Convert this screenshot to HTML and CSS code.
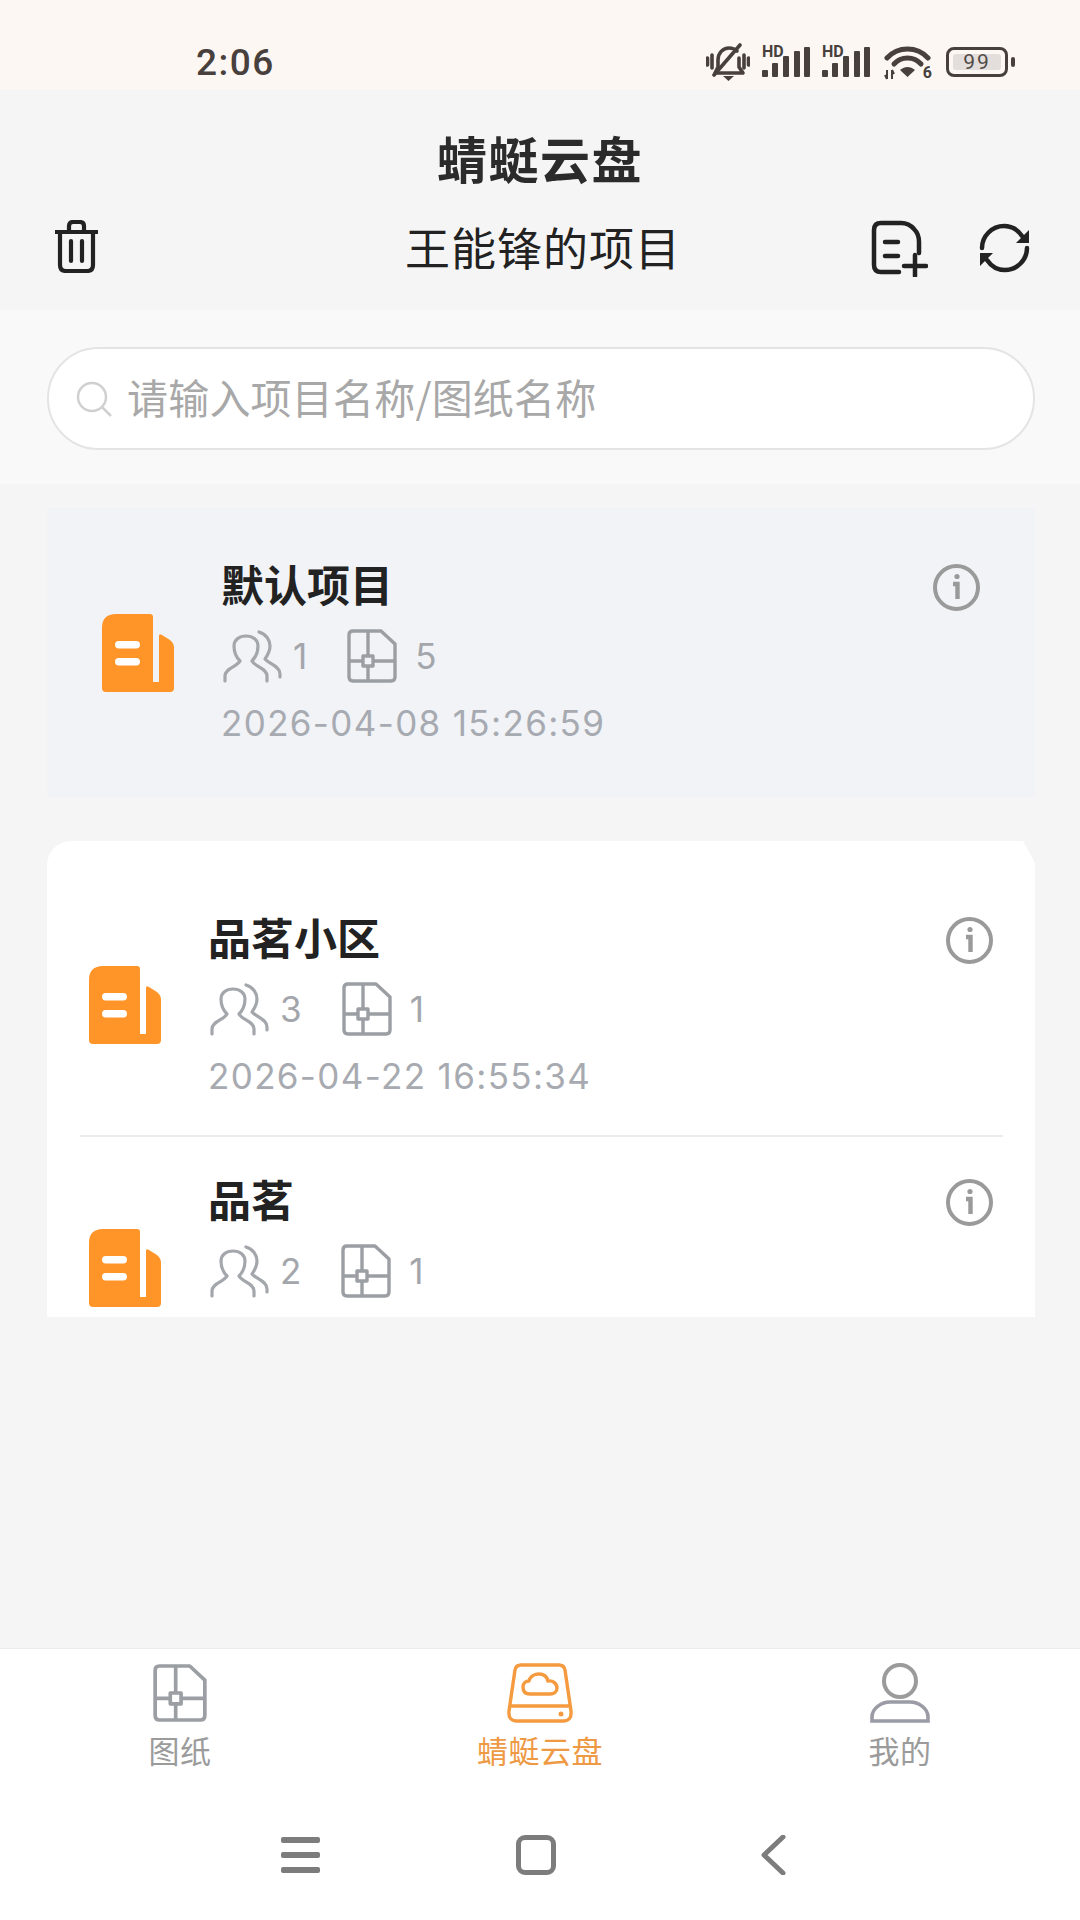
FILE: index.html
```html
<!DOCTYPE html>
<html lang="zh-CN">
<head>
    <meta charset="UTF-8">
    <title>蜻蜓云盘</title>
    <link rel="stylesheet" href="styles.css">
</head>
<body>
    <!-- Shared icons -->
    <svg class="icon-defs" xmlns="http://www.w3.org/2000/svg">
        <symbol id="icon-file" viewBox="0 0 72 78">
            <path fill="#ff9429" d="M14 0H48Q51 0 51 3V68H57V22Q57 19 60 21L68 26Q72 29 72 34V74Q72 78 68 78H4Q0 78 0 74V14Q0 0 14 0Z"/>
            <rect x="13" y="27" width="25" height="7.5" rx="3.7" fill="#fff"/>
            <rect x="13" y="44" width="25" height="7.5" rx="3.7" fill="#fff"/>
        </symbol>
        <symbol id="icon-people" viewBox="0 0 59 53">
            <g fill="none" stroke="#a3a6ab" stroke-width="3.2" stroke-linecap="round" stroke-linejoin="round">
                <path d="M2 51V46C2 38 14 37 17 31C13 27 11 21 11 16C11 10 16 6 23 6C30 6 35 10 35 16C35 21 33 27 29 31C32 37 44 38 44 46V51"/>
                <path d="M36 2C43 4 47 10 47 16C47 22 44 26 42 29C46 34 57 36 57 44V47"/>
            </g>
        </symbol>
        <symbol id="icon-sheet" viewBox="0 0 50 54">
            <g fill="none" stroke="#9b9ea3" stroke-width="3.4" stroke-linejoin="round">
                <path d="M6 2H34L48 15V48Q48 52 44 52H6Q2 52 2 48V6Q2 2 6 2Z"/>
                <path d="M21 2V27M21 37V52M2 32H16M26 32H48"/>
                <rect x="16" y="27" width="10" height="10"/>
            </g>
        </symbol>
        <symbol id="icon-info" viewBox="0 0 47 47">
            <circle cx="23.5" cy="23.5" r="21.5" fill="none" stroke="#9a9a9a" stroke-width="4"/>
            <circle cx="24" cy="12.5" r="2.6" fill="#9a9a9a"/>
            <path d="M20 20H24.5V35" fill="none" stroke="#9a9a9a" stroke-width="4.4"/>
        </symbol>
        <symbol id="icon-bars" viewBox="0 0 50 32">
            <rect x="0" y="24" width="6" height="7" rx="1" fill="#47403d"/>
            <rect x="10" y="17" width="6" height="14" rx="1" fill="#47403d"/>
            <rect x="21" y="10" width="6" height="21" rx="1" fill="#47403d"/>
            <rect x="32" y="5" width="6" height="26" rx="1" fill="#47403d"/>
            <rect x="42" y="1" width="6" height="30" rx="1" fill="#47403d"/>
        </symbol>
    </svg>

    <!-- Status bar -->
    <div class="status-bar">
        <span class="clock">2:06</span>
        <div class="status-icons">
            <svg class="ic-bell" viewBox="0 0 44 39">
                <g fill="none" stroke="#47403d" stroke-width="3.6" stroke-linecap="round" stroke-linejoin="round">
                    <path d="M9 30L12 24V17C12 10 17 5 23 5C26 5 29 6 31 8M33 15V24L37 30H9"/>
                    <path d="M8 32L34 2"/>
                    <path d="M1.5 15V22M6 12V25M38 12V25M42.500 15V22"/>
                </g>
                <path d="M17 33H28L22.500 38Z" fill="#47403d"/>
            </svg>
            <div class="signal">
                <span class="signal-hd">HD</span>
                <svg class="ic-bars"><use href="#icon-bars"/></svg>
            </div>
            <div class="signal">
                <span class="signal-hd">HD</span>
                <svg class="ic-bars"><use href="#icon-bars"/></svg>
            </div>
            <div class="wifi">
                <svg class="ic-wifi" viewBox="0 0 48 34">
                    <g fill="none" stroke="#47403d" stroke-width="5" stroke-linecap="round">
                        <path d="M3 12C14 0 33 0 44 12"/>
                        <path d="M10 18C17 10 30 10 37 18"/>
                    </g>
                    <path d="M16 24C21 20 26 20 31 24L23.500 31Z" fill="#47403d"/>
                    <path d="M3 24V33M1 29L3 33M8 33V24M10 28L8 24" fill="none" stroke="#47403d" stroke-width="2"/>
                </svg>
                <span class="wifi-six">6</span>
            </div>
            <div class="battery">
                <div class="battery-body"><span class="battery-level">99</span></div>
                <div class="battery-tip"></div>
            </div>
        </div>
    </div>

    <!-- Header -->
    <header class="app-header">
        <h1 class="app-title">蜻蜓云盘</h1>
        <div class="toolbar">
            <svg class="ic-trash" viewBox="0 0 43 53">
                <g fill="none" stroke="#222" stroke-width="4.200" stroke-linecap="round" stroke-linejoin="round">
                    <path d="M1 12H42"/>
                    <path d="M14 11V6Q14 2 18 2H25Q29 2 29 6V11"/>
                    <path d="M5 13V45Q5 51 11 51H32Q38 51 38 45V13"/>
                    <path d="M16 21V41M27 21V41"/>
                </g>
            </svg>
            <div class="toolbar-title">王能锋的项目</div>
            <div class="toolbar-actions">
                <svg class="ic-add" viewBox="0 0 57 57">
                    <g fill="none" stroke="#222" stroke-width="4.500" stroke-linecap="round" stroke-linejoin="round">
                        <path d="M28 52H10Q3 52 3 45V10Q3 3 10 3H30Q38 3 43 9Q48 14 48 22V33"/>
                        <path d="M14 22H27M14 36H27"/>
                        <path d="M33 46H55M44 35V56"/>
                    </g>
                </svg>
                <svg class="ic-refresh" viewBox="0 0 51 50">
                    <g fill="none" stroke="#222" stroke-width="4.500" stroke-linecap="round">
                        <path d="M3 25C3 13 13 3 25 3C33 3 39 7 43 13"/>
                        <path d="M48 25C48 37 38 47 26 47C18 47 12 43 8 37"/>
                    </g>
                    <path d="M50 7V20H37Z" fill="#222"/>
                    <path d="M1 43V30H14Z" fill="#222"/>
                </svg>
            </div>
        </div>
    </header>

    <!-- Search -->
    <div class="search-wrap">
        <div class="search-box">
            <svg class="ic-search" viewBox="0 0 36 36">
                <circle cx="16" cy="16" r="14" fill="none" stroke="#d0d0d0" stroke-width="2.500"/>
                <path d="M26 26L35 35" stroke="#d0d0d0" stroke-width="2.500"/>
            </svg>
            <span class="search-placeholder">请输入项目名称/图纸名称</span>
        </div>
    </div>

    <!-- Project list -->
    <main class="content">
        <section class="card card-default">
            <div class="project">
                <svg class="project-icon"><use href="#icon-file"/></svg>
                <div class="project-body">
                    <div class="project-name">默认项目</div>
                    <div class="project-stats">
                        <svg class="ic-people"><use href="#icon-people"/></svg>
                        <span class="stat-num">1</span>
                        <svg class="ic-sheet"><use href="#icon-sheet"/></svg>
                        <span class="stat-num">5</span>
                    </div>
                    <div class="project-date">2026-04-08 15:26:59</div>
                </div>
                <svg class="ic-info"><use href="#icon-info"/></svg>
            </div>
        </section>

        <section class="card card-list">
            <div class="project project-line">
                <svg class="project-icon"><use href="#icon-file"/></svg>
                <div class="project-body">
                    <div class="project-name">品茗小区</div>
                    <div class="project-stats">
                        <svg class="ic-people"><use href="#icon-people"/></svg>
                        <span class="stat-num">3</span>
                        <svg class="ic-sheet"><use href="#icon-sheet"/></svg>
                        <span class="stat-num">1</span>
                    </div>
                    <div class="project-date">2026-04-22 16:55:34</div>
                </div>
                <svg class="ic-info"><use href="#icon-info"/></svg>
            </div>
            <div class="project">
                <svg class="project-icon"><use href="#icon-file"/></svg>
                <div class="project-body">
                    <div class="project-name">品茗</div>
                    <div class="project-stats">
                        <svg class="ic-people"><use href="#icon-people"/></svg>
                        <span class="stat-num">2</span>
                        <svg class="ic-sheet"><use href="#icon-sheet"/></svg>
                        <span class="stat-num">1</span>
                    </div>
                </div>
                <svg class="ic-info"><use href="#icon-info"/></svg>
            </div>
        </section>
    </main>

    <!-- Bottom tabs -->
    <nav class="tab-bar">
        <div class="tab">
            <svg class="tab-icon ic-tab-sheet"><use href="#icon-sheet"/></svg>
            <span class="tab-label">图纸</span>
        </div>
        <div class="tab tab-active">
            <svg class="tab-icon ic-tab-disk" viewBox="0 0 66 60">
                <g fill="none" stroke="#f59a3e" stroke-width="3.400" stroke-linejoin="round">
                    <path d="M14 2H52Q57 2 58 7L64 48Q65 58 56 58H10Q1 58 2 48L8 7Q9 2 14 2Z"/>
                    <path d="M3 43H63"/>
                    <path d="M23 31C18 31 16 28 16 24C16 20 19 18 22 18C23 13 28 11 32 11C37 11 40 14 41 18C46 17 50 21 50 25C50 29 47 31 43 31Z"/>
                </g>
                <circle cx="54" cy="51" r="2.500" fill="#f59a3e"/>
            </svg>
            <span class="tab-label">蜻蜓云盘</span>
        </div>
        <div class="tab">
            <svg class="tab-icon ic-tab-user" viewBox="0 0 60 60">
                <ellipse cx="30" cy="18" rx="16" ry="16" fill="none" stroke="#9b9b9b" stroke-width="4"/>
                <path d="M2 58V54C2 45 12 39 20 39H40C48 39 58 45 58 54V58Z" fill="none" stroke="#9b9ba6" stroke-width="3.600"/>
            </svg>
            <span class="tab-label">我的</span>
        </div>
    </nav>

    <!-- System nav -->
    <div class="system-nav">
        <div class="sys-menu">
            <span class="sys-bar"></span>
            <span class="sys-bar"></span>
            <span class="sys-bar"></span>
        </div>
        <div class="sys-home"></div>
        <svg class="sys-back" viewBox="0 0 26 40">
            <path d="M23 2L4 20L23 38" fill="none" stroke="#7c7c7c" stroke-width="5" stroke-linecap="round" stroke-linejoin="round"/>
        </svg>
    </div>
</body>
</html>
```

FILE: styles.css
```css
/* General Styles */
* {
    box-sizing: border-box;
}
body {
    width: 1080px;
    height: 1920px;
    margin: 0;
    display: flex;
    flex-direction: column;
    overflow: hidden;
    background-color: #f5f5f5;
    font-family: "Noto Sans CJK SC", "Noto Sans", sans-serif;
    color: #222222;
}
.icon-defs {
    display: none;
}

/* Status Bar */
.status-bar {
    height: 90px;
    flex: none;
    display: flex;
    align-items: center;
    justify-content: space-between;
    padding: 34px 65px 0 196px;
    background-color: #fdf7f4;
}
.clock {
    font-family: "Roboto", sans-serif;
    font-size: 37px;
    font-weight: 500;
    letter-spacing: 1.5px;
    color: #47403d;
}
.status-icons {
    display: flex;
    align-items: flex-start;
}
.ic-bell {
    width: 44px;
    height: 39px;
    margin-right: 12px;
}
.signal {
    position: relative;
    width: 50px;
    height: 32px;
    margin-top: 3px;
    margin-right: 10px;
}
.ic-bars {
    width: 50px;
    height: 32px;
}
.signal-hd {
    position: absolute;
    top: 0;
    left: 0;
    line-height: 12px;
    font-family: "Roboto", sans-serif;
    font-size: 16px;
    font-weight: 700;
    color: #47403d;
}
.wifi {
    position: relative;
    width: 48px;
    height: 34px;
    margin-top: 3px;
    margin-left: 2px;
    margin-right: 14px;
}
.ic-wifi {
    width: 48px;
    height: 34px;
}
.wifi-six {
    position: absolute;
    right: 0;
    bottom: 0;
    line-height: 14px;
    font-family: "Roboto", sans-serif;
    font-size: 16px;
    font-weight: 700;
    color: #47403d;
}
.battery {
    display: flex;
    align-items: center;
    margin-top: 4px;
}
.battery-body {
    width: 62px;
    height: 30px;
    padding: 4px;
    border: 3px solid #47403d;
    border-radius: 8px;
    display: flex;
}
.battery-level {
    flex: 1;
    display: flex;
    align-items: center;
    justify-content: center;
    background-color: #e3dedb;
    border-radius: 3px;
    font-family: "Roboto", sans-serif;
    font-size: 21px;
    letter-spacing: 2px;
    color: #524b48;
}
.battery-tip {
    width: 4px;
    height: 10px;
    margin-left: 3px;
    border-radius: 2px;
    background-color: #47403d;
}

/* Header */
.app-header {
    height: 220px;
    flex: none;
    background-color: #f5f5f5;
}
.app-title {
    margin: 0;
    padding-top: 37px;
    height: 100px;
    line-height: 60px;
    text-align: center;
    font-size: 50px;
    font-weight: 700;
    letter-spacing: 1.5px;
    color: #2b2b2b;
}
.toolbar {
    display: flex;
    align-items: center;
    justify-content: space-between;
    height: 60px;
    margin-top: 28px;
    padding: 0 50px 0 55px;
}
.toolbar-title {
    flex: 1;
    margin-left: -43px;
    margin-right: -160px;
    margin-top: -4px;
    text-align: center;
    font-size: 45px;
    letter-spacing: 1px;
    color: #222222;
}
.toolbar-actions {
    display: flex;
    align-items: center;
    gap: 51px;
}
.ic-trash {
    width: 43px;
    height: 53px;
    margin-top: -4px;
}
.ic-add {
    width: 57px;
    height: 57px;
    margin-top: 1px;
}
.ic-refresh {
    width: 51px;
    height: 50px;
}

/* Search */
.search-wrap {
    height: 174px;
    flex: none;
    padding-top: 37px;
    padding-left: 47px;
    padding-right: 45px;
    background-color: #f9f9f9;
}
.search-box {
    height: 103px;
    display: flex;
    align-items: center;
    padding-left: 27px;
    background-color: #ffffff;
    border: 2px solid #e4e4e4;
    border-radius: 52px;
}
.ic-search {
    width: 36px;
    height: 36px;
    margin-right: 15px;
}
.search-placeholder {
    font-size: 41px;
    letter-spacing: 0.2px;
    margin-top: -6px;
    color: #a8a8a8;
}

/* Project List */
.content {
    flex: 1;
    padding: 24px 45px 0 47px;
}
.card-default {
    height: 289px;
    padding: 14px 45px 0 46px;
    background-color: #f1f3f7;
}
.card-list {
    position: relative;
    height: 476px;
    margin-top: 44px;
    padding: 34px 32px 0 33px;
    overflow: hidden;
    background-color: #ffffff;
    border-top-left-radius: 24px;
}
/* clipped corner of the white card */
.card-list::after {
    content: "";
    position: absolute;
    top: 0;
    right: 0;
    width: 12px;
    height: 22px;
    background-color: #f5f5f5;
    clip-path: polygon(0 0, 100% 0, 100% 100%);
}
.project {
    display: flex;
    align-items: center;
    height: 262px;
    padding-left: 9px;
    padding-right: 10px;
}
.project-line {
    border-bottom: 2px solid #ececec;
}
.project-icon {
    width: 72px;
    height: 78px;
    flex: none;
    margin-right: 47px;
}
.project-body {
    flex: 1;
    align-self: flex-start;
    padding-top: 36px;
}
.project-name {
    height: 50px;
    line-height: 50px;
    font-size: 43px;
    font-weight: 700;
    color: #222222;
}
.project-stats {
    display: flex;
    align-items: center;
    height: 54px;
    margin-top: 21px;
}
.ic-people {
    width: 59px;
    height: 53px;
    margin-left: 2px;
    margin-right: 11px;
}
.ic-sheet {
    width: 50px;
    height: 54px;
    margin-left: 40px;
    margin-right: 18px;
}
.stat-num {
    font-family: "Inter", sans-serif;
    font-size: 35px;
    color: #a3a6ab;
}
.project-date {
    height: 44px;
    line-height: 44px;
    margin-top: 18px;
    font-family: "Inter", sans-serif;
    font-size: 35px;
    letter-spacing: 1.35px;
    color: #a7aab0;
    white-space: nowrap;
}
.ic-info {
    width: 47px;
    height: 47px;
    flex: none;
    align-self: flex-start;
    margin-top: 42px;
}

/* Tab Bar */
.tab-bar {
    height: 142px;
    flex: none;
    display: flex;
    background-color: #ffffff;
    border-top: 1px solid #ebebeb;
}
.tab {
    flex: 1;
    display: flex;
    flex-direction: column;
    align-items: center;
    padding-top: 14px;
}
.tab-icon {
    width: 60px;
    height: 60px;
}
.ic-tab-sheet {
    width: 54px;
}
.ic-tab-disk {
    width: 66px;
}
.tab-label {
    margin-top: 6px;
    line-height: 42px;
    font-size: 31px;
    letter-spacing: 0.5px;
    color: #9b9b9b;
}
.tab-active .tab-label {
    color: #ee9a45;
}

/* System Nav */
.system-nav {
    height: 130px;
    flex: none;
    display: flex;
    align-items: center;
    padding-left: 281px;
    background-color: #ffffff;
}
.sys-menu {
    width: 39px;
    height: 36px;
    display: flex;
    flex-direction: column;
    justify-content: space-between;
}
.sys-bar {
    height: 6px;
    border-radius: 2px;
    background-color: #7c7c7c;
}
.sys-home {
    width: 40px;
    height: 40px;
    margin-left: 196px;
    border: 5px solid #7c7c7c;
    border-radius: 9px;
}
.sys-back {
    width: 26px;
    height: 40px;
    margin-left: 204px;
}
```
